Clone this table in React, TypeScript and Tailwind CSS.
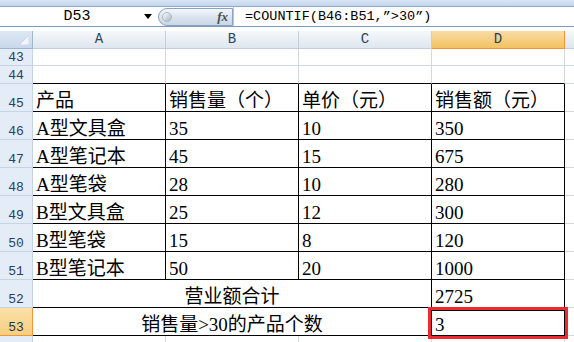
import React from "react";

const cols = ["A", "B", "C", "D"];

const rows: { n: number; cells: string[] }[] = [
  { n: 45, cells: ["产品", "销售量（个）", "单价（元）", "销售额（元）"] },
  { n: 46, cells: ["A型文具盒", "35", "10", "350"] },
  { n: 47, cells: ["A型笔记本", "45", "15", "675"] },
  { n: 48, cells: ["A型笔袋", "28", "10", "280"] },
  { n: 49, cells: ["B型文具盒", "25", "12", "300"] },
  { n: 50, cells: ["B型笔袋", "15", "8", "120"] },
  { n: 51, cells: ["B型笔记本", "50", "20", "1000"] },
];

const cellFont = { fontFamily: '"Liberation Serif", "Noto Sans CJK SC", serif' };
const monoFont = { fontFamily: '"Liberation Mono", "Noto Sans CJK SC", monospace' };

function RowHead({ n, active }: { n: number; active?: boolean }) {
  return (
    <div
      className={`h-full w-[33px] shrink-0 flex items-end justify-center pb-[1px] text-[13px] leading-none border-r border-b ${
        active
          ? "bg-gradient-to-b from-[#fbe0a8] to-[#f7cf7f] border-[#f29536] text-[#1f3550]"
          : "bg-[#e4ecf7] border-[#c5d3e6] text-[#27415f]"
      }`}
      style={monoFont}
    >
      {n}
    </div>
  );
}

function Cell({ text }: { text?: string }) {
  return (
    <div
      className="w-[133px] shrink-0 flex items-end pl-[3px] pb-[1px] text-[19px] leading-none text-black border-r border-b border-black"
      style={cellFont}
    >
      {text}
    </div>
  );
}

export default function App() {
  return (
    <div className="relative w-[574px] h-[342px] overflow-hidden bg-white">
      {/* ribbon edge */}
      <div className="h-[7px] bg-gradient-to-b from-[#d9e6f5] to-[#c3d6ec] border-b border-[#8ea9c9]" />

      {/* name box + formula bar */}
      <div className="h-[20px] flex items-center border-b border-[#7b98bd] bg-white">
        <div className="w-[158px] h-full flex items-center relative">
          <span className="flex-1 text-center text-[15px] leading-none text-black pr-[4px]" style={monoFont}>
            D53
          </span>
          <span className="absolute right-[6px] top-[7px] w-0 h-0 border-l-[4px] border-r-[4px] border-t-[5px] border-l-transparent border-r-transparent border-t-black" />
        </div>
        <div className="w-[75px] h-[18px] rounded-l-full bg-gradient-to-b from-[#f4f7fb] via-[#dbe4ef] to-[#c9d6e6] border border-[#8aa3c2] flex items-center justify-between pl-[3px] pr-[4px]">
          <span className="w-[10px] h-[10px] rounded-full bg-gradient-to-br from-white to-[#a9b4c2] border border-[#aab6c6]" />
          <span className="text-[13px] italic font-bold text-[#4d4d4d]" style={{ fontFamily: '"Liberation Serif", serif' }}>
            fx
          </span>
        </div>
        <div className="w-[1px] h-full bg-[#b8c8dc]" />
        <div className="pl-[11px] text-[13.5px] leading-none text-black" style={monoFont}>
          =COUNTIF(B46:B51,”&gt;30”)
        </div>
      </div>
      <div className="h-[4px] bg-white" />

      {/* column headers */}
      <div className="h-[18px] flex">
        <div className="w-[33px] shrink-0 relative bg-gradient-to-b from-[#dfe8f4] to-[#c8d8ec] border-r border-b border-[#9eb6ce]">
          <svg className="absolute right-[3px] bottom-[3px]" width="10" height="10" viewBox="0 0 10 10">
            <path d="M10 0 L10 10 L0 10 Z" fill="#f2f6fb" stroke="#b7c7db" strokeWidth="0.6" />
          </svg>
        </div>
        {cols.map((c) => (
          <div
            key={c}
            className={`w-[133px] shrink-0 flex items-end justify-center pb-[2px] text-[14px] leading-none border-r border-b ${
              c === "D"
                ? "bg-gradient-to-b from-[#f9dca5] to-[#f2c25f] border-[#f29536] text-[#2a3f55]"
                : "bg-gradient-to-b from-[#f6f8fb] to-[#dfe6ef] border-[#c3cfdf] text-[#2a4560]"
            }`}
            style={monoFont}
          >
            {c}
          </div>
        ))}
        <div className="flex-1 bg-gradient-to-b from-[#f6f8fb] to-[#dfe6ef] border-b border-[#c3cfdf]" />
      </div>

      {/* rows 43-44 */}
      {[43, 44].map((n) => (
        <div key={n} className={`${n === 43 ? "h-[17px]" : "h-[18px]"} flex`}>
          <RowHead n={n} />
          {cols.map((c) => (
            <div
              key={c}
              className={`w-[133px] shrink-0 border-r border-[#d0d7e5] border-b ${n === 44 ? "border-b-black" : ""}`}
            />
          ))}
          <div className="flex-1 border-b border-[#d0d7e5]" />
        </div>
      ))}

      {/* data rows */}
      {rows.map((r) => (
        <div key={r.n} className="h-[28px] flex">
          <RowHead n={r.n} />
          {r.cells.map((t, i) => (
            <Cell key={i} text={t} />
          ))}
          <div className="flex-1 border-b border-[#d0d7e5]" />
        </div>
      ))}

      {/* totals */}
      {[
        { n: 52, label: "营业额合计", value: "2725" },
        { n: 53, label: "销售量>30的产品个数", value: "3" },
      ].map((r) => (
        <div key={r.n} className="h-[28px] flex">
          <RowHead n={r.n} active={r.n === 53} />
          <div
            className="w-[399px] shrink-0 flex items-end justify-center pb-[1px] text-[19px] leading-none text-black border-r border-b border-black"
            style={cellFont}
          >
            {r.label}
          </div>
          <Cell text={r.value} />
          <div className="flex-1 border-b border-[#d0d7e5]" />
        </div>
      ))}

      {/* row 54 */}
      <div className="h-[10px] flex">
        <div className="w-[33px] shrink-0 bg-[#e4ecf7] border-r border-[#c5d3e6]" />
        {cols.map((c) => (
          <div key={c} className="w-[133px] shrink-0 border-r border-[#d0d7e5]" />
        ))}
      </div>

      {/* active cell + annotation box */}
      <div className="absolute left-[430px] top-[309px] w-[136px] h-[28px] border-2 border-black" />
      <div className="absolute left-[428px] top-[307px] w-[140px] h-[32px] border-[3px] border-[#ec2a2f]" />
    </div>
  );
}
